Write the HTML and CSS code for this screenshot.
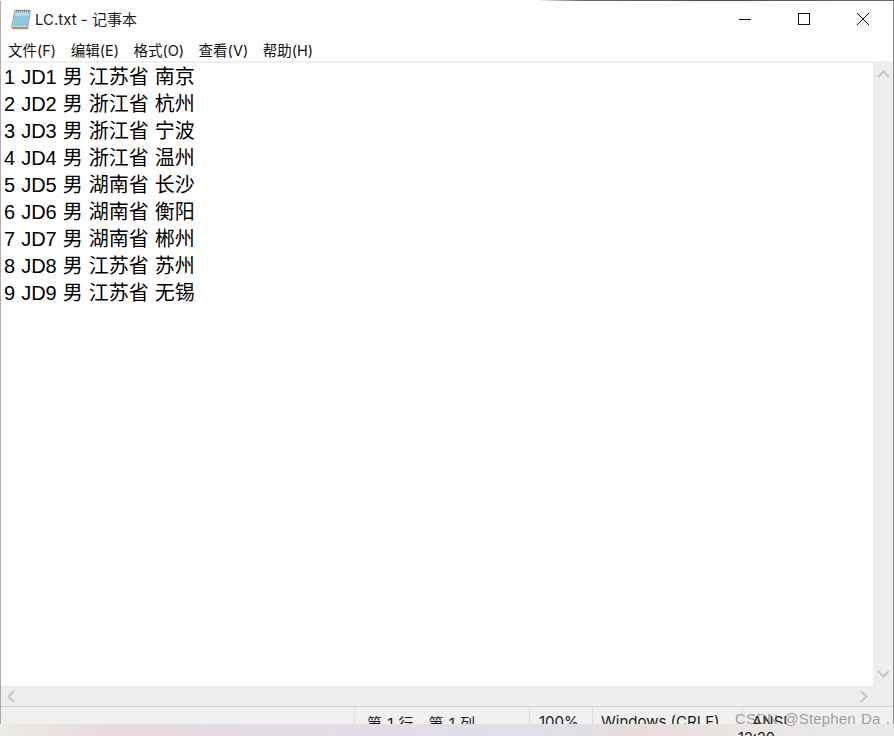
FILE: index.html
```html
<!DOCTYPE html>
<html lang="zh">
<head>
<meta charset="utf-8">
<title>LC.txt - 记事本</title>
<link rel="stylesheet" href="styles.css">
</head>
<body>
<div class="screen">
  <div class="desk-top"></div>
  <div class="window">
    <header class="titlebar">
      <svg class="app-icon" width="22" height="22" viewBox="0 0 22 22">
        <path d="M5 2.500h15.500L17.500 19.500H1.500z" fill="#b5dbe8" stroke="#86a3ae" stroke-width="1"/>
        <path d="M4.500 8h14.500l-2 10H3z" fill="#93c7da"/>
        <path d="M2 20.500h15.500l.5-1.500" fill="none" stroke="#a89870" stroke-width="1.500"/>
        <path d="M6.500 1.500v3M8.500 1.500v3M10.500 1.500v3M12.500 1.500v3M14.500 1.500v3M16.500 1.500v3M18.500 1.500v3" stroke="#7c898f" stroke-width="1"/>
      </svg>
      <span class="title">LC.txt - 记事本</span>
      <div class="controls">
        <span class="control"><svg width="14" height="14" viewBox="0 0 14 14"><path d="M1 7.500h12" stroke="#111" stroke-width="1"/></svg></span>
        <span class="control"><svg width="14" height="14" viewBox="0 0 14 14"><rect x="1.500" y="1.500" width="11" height="11" fill="none" stroke="#111" stroke-width="1"/></svg></span>
        <span class="control"><svg width="14" height="14" viewBox="0 0 14 14"><path d="M1 1l12 12M13 1L1 13" stroke="#111" stroke-width="1"/></svg></span>
      </div>
    </header>
    <nav class="menubar">
      <span>文件(F)</span><span>编辑(E)</span><span>格式(O)</span><span>查看(V)</span><span>帮助(H)</span>
    </nav>
    <div class="editor">
      <div class="editor-row">
        <pre class="text">1 JD1 男 江苏省 南京
2 JD2 男 浙江省 杭州
3 JD3 男 浙江省 宁波
4 JD4 男 浙江省 温州
5 JD5 男 湖南省 长沙
6 JD6 男 湖南省 衡阳
7 JD7 男 湖南省 郴州
8 JD8 男 江苏省 苏州
9 JD9 男 江苏省 无锡</pre>
        <div class="vscroll">
          <svg width="13" height="8" viewBox="0 0 13 8"><path d="M1 7l5.500-5.500L12 7" fill="none" stroke="#c6c6c6" stroke-width="2"/></svg>
          <svg width="13" height="8" viewBox="0 0 13 8"><path d="M1 1l5.500 5.500L12 1" fill="none" stroke="#c6c6c6" stroke-width="2"/></svg>
        </div>
      </div>
      <div class="hscroll">
        <svg width="8" height="13" viewBox="0 0 8 13"><path d="M7 1L1.500 6.500 7 12" fill="none" stroke="#c6c6c6" stroke-width="2"/></svg>
        <svg width="8" height="13" viewBox="0 0 8 13"><path d="M1 1l5.500 5.500L1 12" fill="none" stroke="#c6c6c6" stroke-width="2"/></svg>
      </div>
    </div>
    <footer class="statusbar">
      <span class="cell cell-pos">第 1 行，第 1 列</span>
      <span class="cell cell-zoom">100%</span>
      <span class="cell cell-eol">Windows (CRLF)</span>
      <span class="cell cell-enc">ANSI</span>
    </footer>
  </div>
  <div class="desk-bottom"><span class="clock">12:20</span></div>
  <span class="watermark">CSDN @Stephen Da .</span>
</div>
</body>
</html>
```
FILE: styles.css
```css
* { box-sizing: border-box; }
html, body { margin: 0; padding: 0; }
body {
  width: 894px;
  height: 736px;
  overflow: hidden;
  background: #fff;
  font-family: Inter, "Noto Sans CJK SC", sans-serif;
  color: #111;
}
.screen {
  position: relative;
  width: 894px;
  height: 736px;
  display: flex;
  flex-direction: column;
  overflow: hidden;
  background: #fff;
}
.desk-top {
  height: 1px;
  flex: none;
  background: linear-gradient(90deg, #fff 0, #fff 60%, #6b6670 65%, #5a4a48 80%, #6d6a75 100%);
}
.window {
  height: 723px;
  flex: none;
  display: flex;
  flex-direction: column;
  border-left: 1px solid #b4a6ac;
  border-right: 1px solid #8a8a8a;
  background: #fff;
  overflow: hidden;
}
.titlebar {
  height: 38px;
  flex: none;
  display: flex;
  align-items: center;
  padding: 0 0 2px 9px;
}
.app-icon { flex: none; }
.title {
  margin: 0 0 2px 3px;
  font-size: 15px;
  color: #1a1a1a;
}
.controls {
  margin-left: auto;
  display: flex;
}
.control {
  width: 59px;
  height: 36px;
  display: flex;
  align-items: center;
  justify-content: center;
}
.controls .control:last-child { width: 60px; }
.menubar {
  height: 24px;
  flex: none;
  display: flex;
  gap: 14.500px;
  align-items: center;
  padding: 0 0 1px 7px;
  font-size: 14.500px;
  border-bottom: 2px solid #f0f0f0;
}
.editor {
  flex: 1;
  display: flex;
  flex-direction: column;
  min-height: 0;
}
.editor-row {
  flex: 1;
  min-height: 0;
  display: flex;
}
.text {
  flex: 1;
  margin: 0;
  padding: 1px 0 0 3px;
  font-family: "Liberation Sans", "Noto Sans CJK SC", sans-serif;
  font-size: 20px;
  line-height: 27px;
  word-spacing: 0.450px;
  color: #000;
}
.vscroll {
  width: 20px;
  flex: none;
  background: #eeeeee;
  display: flex;
  flex-direction: column;
  justify-content: space-between;
  align-items: center;
  padding: 7px 0 8px;
}
.hscroll {
  height: 20px;
  flex: none;
  background: #eeeeee;
  display: flex;
  justify-content: space-between;
  align-items: center;
  padding: 0 25px 0 6px;
}
.statusbar {
  height: 18px;
  flex: none;
  display: flex;
  background: #f0f0f0;
  border-top: 1px solid #d4d4d4;
  font-size: 15px;
  overflow: hidden;
}
.cell {
  display: block;
  padding: 5px 0 0 12px;
  border-left: 1px solid #dcdcdc;
  white-space: nowrap;
  color: #1a1a1a;
}
.cell-pos { margin-left: 353px; width: 175px; word-spacing: 1px; }
.cell-zoom { width: 63px; padding-left: 9px; }
.cell-eol { width: 150px; padding-left: 8px; }
.cell-enc { padding-left: 9px; }
.desk-bottom {
  flex: 1;
  position: relative;
  background: linear-gradient(90deg, #ecebe6 0, #e8dadd 12%, #e6dbe5 25%, #e3dde9 45%, #e0dfe9 62%, #e9dcdc 72%, #eae6e4 85%, #e9e9ea 100%);
  overflow: hidden;
}
.clock {
  position: absolute;
  left: 738px;
  top: 5px;
  font-size: 14.500px;
  color: #1a1a1a;
}
.watermark {
  position: absolute;
  left: 735px;
  top: 710px;
  font-family: "Liberation Sans", sans-serif;
  font-size: 15px;
  letter-spacing: 0.150px;
  word-spacing: 1px;
  color: rgba(100, 100, 100, 0.6);
  white-space: nowrap;
}
```
